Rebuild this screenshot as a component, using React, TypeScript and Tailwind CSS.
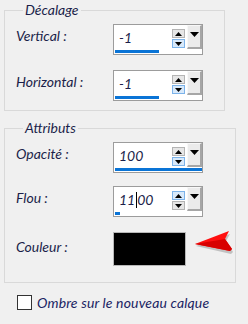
import type { ReactNode } from 'react';

function Tri({ dir, w = 7, h = 4 }: { dir: 'up' | 'down'; w?: number; h?: number }) {
  return (
    <svg width={w} height={h} viewBox={`0 0 ${w} ${h}`}>
      <path d={dir === 'up' ? `M0 ${h}L${w / 2} 0L${w} ${h}Z` : `M0 0L${w} 0L${w / 2} ${h}Z`} fill="#000" />
    </svg>
  );
}

function SpinBtn({ dir, hot }: { dir: 'up' | 'down'; hot: boolean }) {
  return (
    <div
      className={`w-[13px] h-[9px] flex items-center justify-center border ${
        hot ? 'border-[#7cb3ea] bg-[#d8e9fa]' : 'border-[#b4b4b4] bg-[#e6e6e6]'
      }`}
    >
      <Tri dir={dir} />
    </div>
  );
}

function SpinBox({ value, pct, hot }: { value: ReactNode; pct: number; hot: 'up' | 'down' }) {
  return (
    <div className="w-[90px] h-[31px] border border-[#9c9c9c] bg-white flex flex-col">
      <div className="flex h-[25px]">
        <div className="flex-1 pl-[5px] pt-[4px] leading-[17px] text-[14px] italic text-[#1b1f4a]">{value}</div>
        <div className="w-[13px] pt-[4px] flex flex-col gap-[1px]">
          <SpinBtn dir="up" hot={hot === 'up'} />
          <SpinBtn dir="down" hot={hot === 'down'} />
        </div>
        <div className="ml-[2px] w-[15px] h-[24px] bg-[#ebebeb] border-l border-t border-l-[#f8f8f8] border-t-[#f8f8f8] border-r-2 border-b-2 border-r-[#a6a6a6] border-b-[#a6a6a6] flex justify-center pt-[6px]">
          <Tri dir="down" w={9} h={5} />
        </div>
      </div>
      <div className="h-[3px] ml-[1px] bg-[#0a74d6]" style={{ width: `${pct}%` }} />
    </div>
  );
}

function Row({ label, children }: { label: string; children: ReactNode }) {
  return (
    <div className="flex">
      <div className="w-[97px] leading-[17px] mt-[3px]">{label}</div>
      {children}
    </div>
  );
}

function RedArrow() {
  return (
    <svg width="40" height="26" viewBox="0 0 40 26" className="ml-[9px] -mt-[2px] overflow-visible">
      <path d="M1 16L35 4L31 11L38 22L36 24Z" fill="#9a9a9a" opacity="0.55" />
      <path d="M0 14L34 1L30 9L37 19L35 21Z" fill="#ff1010" />
      <path d="M0 14L30 9L37 19L35 21Z" fill="#d80000" />
    </svg>
  );
}

export default function App() {
  return (
    <div className="w-[248px] h-[324px] bg-[#f0f0f0] pl-[4px] pt-[2px] font-['Lato',sans-serif] text-[14px] italic text-[#1b1f4a]">
      <fieldset className="w-[221px] border border-[#d9d9d9] pl-[11px] pt-[6px] pb-[9px]">
        <legend className="ml-[7px] px-[2px] leading-[16px]">Décalage</legend>
        <div className="flex flex-col gap-[15px]">
          <Row label="Vertical :">
            <SpinBox value="-1" pct={50} hot="down" />
          </Row>
          <Row label="Horizontal :">
            <SpinBox value="-1" pct={50} hot="down" />
          </Row>
        </div>
      </fieldset>

      <fieldset className="mt-[9px] w-[221px] border border-[#d9d9d9] pl-[11px] pt-[6px] pb-[16px]">
        <legend className="ml-[7px] px-[2px] leading-[16px]">Attributs</legend>
        <div className="flex flex-col">
          <Row label="Opacité :">
            <SpinBox value="100" pct={99} hot="down" />
          </Row>
          <div className="mt-[13px]">
            <Row label="Flou :">
              <SpinBox
                value={
                  <span className="inline-flex items-center">
                    11<span className="inline-block w-[1px] h-[16px] bg-black mx-[0.5px]" />00
                  </span>
                }
                pct={6}
                hot="up"
              />
            </Row>
          </div>
          <div className="mt-[15px] flex">
            <div className="w-[97px] mt-[6px] leading-[17px]">Couleur :</div>
            <div className="w-[73px] h-[34px] border border-[#b8b8b8] bg-black" />
            <RedArrow />
          </div>
        </div>
      </fieldset>

      <div className="mt-[11px] ml-[13px] flex items-center gap-[5px]">
        <div className="w-[15px] h-[15px] border border-[#333] bg-white" />
        <span className="leading-[17px] tracking-[0.15px] text-[#1a2463]">Ombre sur le nouveau calque</span>
      </div>
    </div>
  );
}
